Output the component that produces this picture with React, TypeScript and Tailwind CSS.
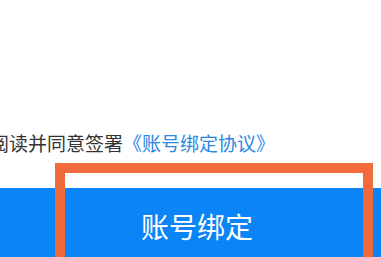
import React from "react";

const FONT = { fontFamily: '"Noto Sans CJK SC", "Noto Sans", sans-serif' };

function AgreementRow() {
    return (
        <div className="flex items-center h-[26px] -ml-[10px] text-[19px] leading-[26px] whitespace-nowrap">
            <span className="text-[#333333]">阅读并同意签署</span>
            <span className="text-[#2c88e3]">《账号绑定协议》</span>
        </div>
    );
}

function BindButton() {
    return (
        <button className="flex items-center justify-center w-full h-[76px] pl-[13px] bg-[#0b84f7] text-white text-[28px] leading-none">
            账号绑定
        </button>
    );
}

export default function App() {
    return (
        <div
            className="relative w-[381px] h-[257px] overflow-hidden bg-white"
            style={FONT}
        >
            <div className="flex flex-col pt-[130px]">
                <AgreementRow />
                <div className="mt-[32px]">
                    <BindButton />
                </div>
            </div>
            {/* annotation frame */}
            <div className="absolute left-[55px] top-[163px] w-[318px] h-[130px] border-[10px] border-[#f26a3b] pointer-events-none" />
        </div>
    );
}
